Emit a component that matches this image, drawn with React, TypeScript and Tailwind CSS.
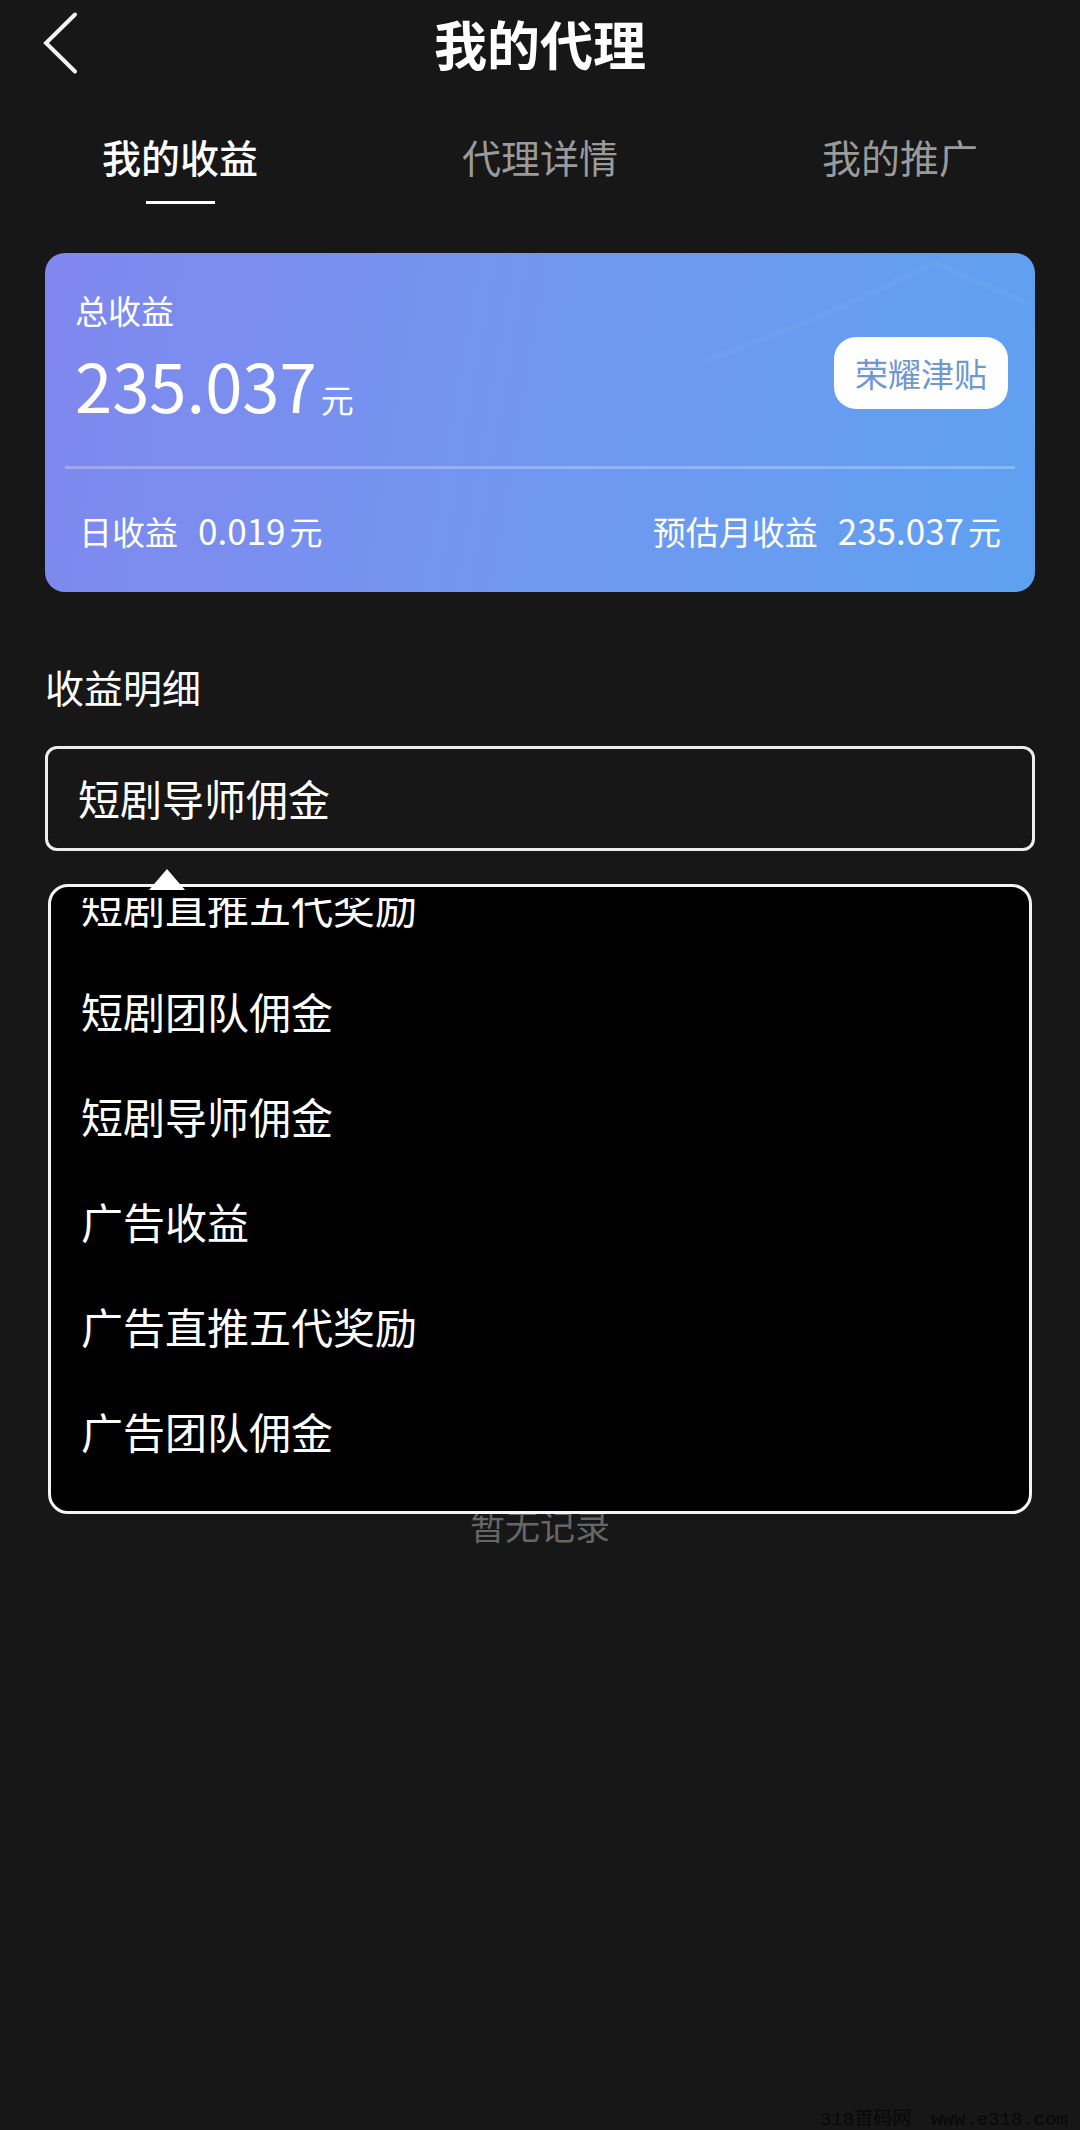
import { useEffect, useRef, useState } from "react";

const tabs = ["我的收益", "代理详情", "我的推广"];

const incomeTypes = [
  "短剧直推五代奖励",
  "短剧团队佣金",
  "短剧导师佣金",
  "广告收益",
  "广告直推五代奖励",
  "广告团队佣金",
];

function Header() {
  return (
    <header className="grid h-[86px] grid-cols-[1fr_auto_1fr] items-center px-[42px]">
      <button type="button" aria-label="返回" className="w-9">
        <svg viewBox="0 0 36 64" className="h-16 w-9" fill="none">
          <path
            d="M33 3.5 4 32 33 60.5"
            stroke="#f4f4f4"
            strokeWidth="4"
            strokeLinecap="round"
          />
        </svg>
      </button>
      <h1 className="text-[53px] leading-[80px] font-bold">我的代理</h1>
    </header>
  );
}

function Tabs() {
  const [active, setActive] = useState(0);

  return (
    <nav role="tablist" className="grid grid-cols-3 pt-10">
      {tabs.map((tab, i) => (
        <button
          key={tab}
          type="button"
          role="tab"
          aria-selected={i === active}
          onClick={() => setActive(i)}
          className={
            i === active
              ? "flex flex-col items-center text-[39px] leading-[60px] font-medium text-white"
              : "flex flex-col items-center text-[39px] leading-[60px] text-[#9a9a9a]"
          }
        >
          {tab}
          {i === active && (
            <span className="mt-[15px] h-[3px] w-[69px] bg-white" />
          )}
        </button>
      ))}
    </nav>
  );
}

function IncomeCard() {
  return (
    <section className="relative mt-[49px] h-[339px] overflow-hidden rounded-[20px] bg-linear-100 from-[#8087ee] via-[#7197f0] to-[#5ea1f0] px-5">
      {/* faint streaks in the card background */}
      <svg
        viewBox="0 0 990 339"
        preserveAspectRatio="none"
        className="absolute inset-0 h-full w-full"
        fill="none"
      >
        <path
          d="M660 108 775 64 890 10 985 52"
          stroke="#fff"
          strokeOpacity="0.03"
          strokeWidth="7"
        />
      </svg>

      <div className="relative flex h-[213px] items-center justify-between pr-[7px] pl-[10px]">
        <div className="pt-4">
          <p className="text-[33px] leading-[48px]">总收益</p>
          <p className="text-[67px] leading-[100px]">
            235.037<span className="ml-1 text-[33px]">元</span>
          </p>
        </div>
        <button
          type="button"
          className="mt-[26px] h-[72px] w-[174px] rounded-[22px] bg-white text-[33px] leading-[48px] text-[#6f97d3]"
        >
          荣耀津贴
        </button>
      </div>

      <div className="relative flex h-[126px] items-center justify-between border-t-[3px] border-white/25 px-[14px] text-[33px] leading-[48px]">
        <p>
          日收益<span className="ml-5 text-[35px]">0.019</span>
          <span className="ml-1">元</span>
        </p>
        <p>
          预估月收益<span className="ml-5 text-[35px]">235.037</span>
          <span className="ml-1">元</span>
        </p>
      </div>
    </section>
  );
}

function IncomeDetails() {
  const [type, setType] = useState("短剧导师佣金");
  const listRef = useRef<HTMLUListElement>(null);

  useEffect(() => {
    if (listRef.current) listRef.current.scrollTop = listRef.current.scrollHeight;
  }, []);

  return (
    <section className="mt-16">
      <label htmlFor="income-type" className="block text-[39px] leading-[60px]">
        收益明细
      </label>

      <div className="relative mt-[30px]">
        <select
          id="income-type"
          value={type}
          onChange={(e) => setType(e.target.value)}
          className="block h-[105px] w-full appearance-none rounded-xl border-[3px] border-[#ededed] bg-transparent px-[30px] pb-0.5 text-[42px] leading-[60px]"
        >
          {incomeTypes.map((name) => (
            <option key={name}>{name}</option>
          ))}
        </select>

        {/* Dropdown */}
        <div className="absolute inset-x-[3px] top-[138px] rounded-[20px] border-[3px] border-[#f4f4f4] bg-black py-[11px]">
          <svg
            viewBox="0 0 36 21"
            className="absolute -top-[18px] left-[98px] h-[21px] w-9"
          >
            <path d="M18 0 36 21H0Z" fill="#fff" />
          </svg>
          <ul
            ref={listRef}
            className="h-[602px] overflow-y-auto pb-[15px] [scrollbar-width:none]"
          >
            {incomeTypes.map((name) => (
              <li key={name}>
                <button
                  type="button"
                  onClick={() => setType(name)}
                  className="block h-[105px] w-full px-[30px] pb-1 text-left text-[42px] leading-[60px]"
                >
                  {name}
                </button>
              </li>
            ))}
          </ul>
        </div>
      </div>

      <p className="mt-[648px] text-center text-[35px] leading-[52px] text-[#666]">
        暂无记录
      </p>
    </section>
  );
}

export default function App() {
  return (
    <div className="flex min-h-screen flex-col bg-[#171717] font-['Noto_Sans_CJK_SC',sans-serif] text-white">
      <Header />
      <Tabs />
      <main className="px-[45px]">
        <IncomeCard />
        <IncomeDetails />
      </main>
      <footer className="mt-auto flex justify-end gap-5 pr-3 font-['Liberation_Mono','Noto_Sans_CJK_SC',monospace] text-[19px] leading-5 text-[#080808]">
        <span>318首码网</span>
        <span>www.e318.com</span>
      </footer>
    </div>
  );
}
